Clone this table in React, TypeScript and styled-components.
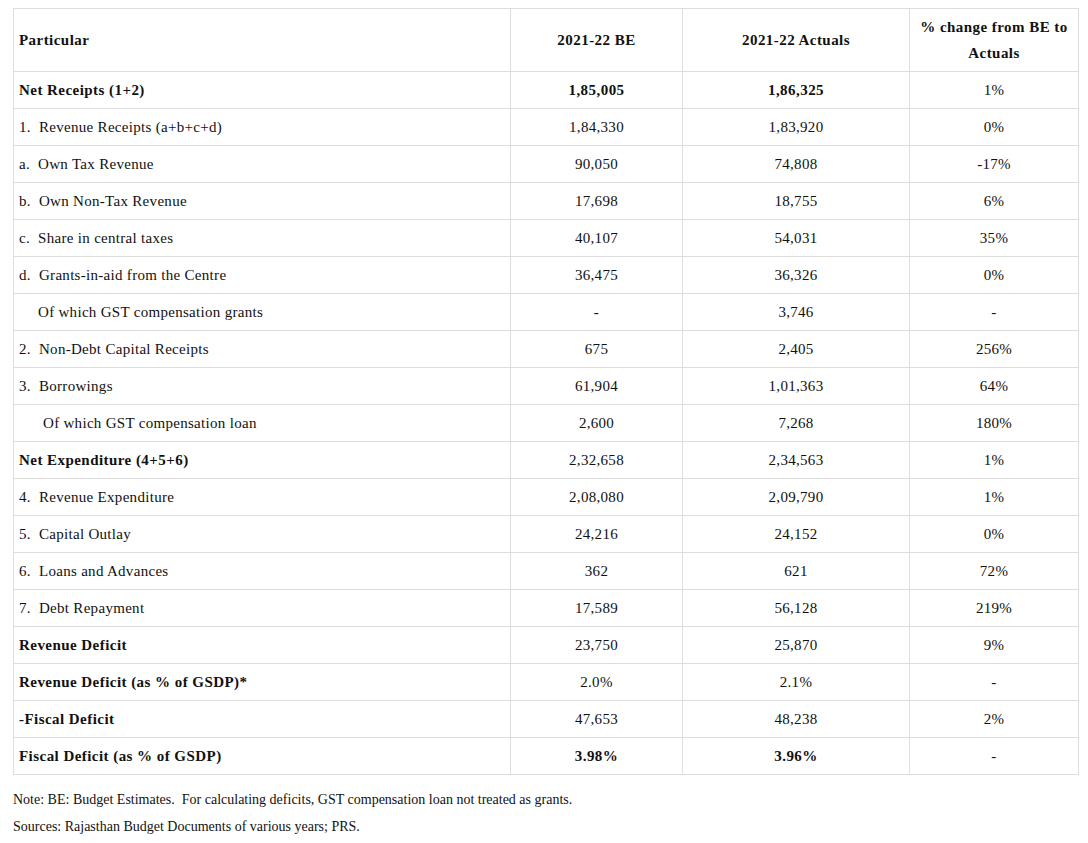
import React from "react";
import styled, { createGlobalStyle } from "styled-components";

const SERIF = `"Liberation Serif", "Times New Roman", Times, serif`;

const Global = createGlobalStyle`
  body {
    margin: 8px;
    background: #fff;
    font-family: ${SERIF};
    color: #111;
  }
`;

const Wrap = styled.div`
  padding-left: 5px;
  font-family: ${SERIF};
  color: #111;
`;

const Table = styled.table`
  width: 1065px;
  border-collapse: collapse;
  table-layout: fixed;
  font-family: ${SERIF};
  font-size: 15px;
  line-height: 26px;
  color: #111;
`;

const Th = styled.th<{ $left?: boolean }>`
  border: 1px solid #ddd;
  padding: 5px 5px;
  font-family: ${SERIF};
  font-weight: bold;
  letter-spacing: 0.45px;
  text-align: ${(p) => (p.$left ? "left" : "center")};
  vertical-align: middle;
`;

const Td = styled.td<{ $left?: boolean; $bold?: boolean; $indent?: number }>`
  border: 1px solid #ddd;
  padding: 5px 5px 5px ${(p) => 5 + (p.$indent ?? 0)}px;
  height: 26px;
  font-family: ${SERIF};
  font-weight: ${(p) => (p.$bold ? "bold" : "normal")};
  letter-spacing: ${(p) => (p.$bold ? "0.45px" : "0.3px")};
  text-align: ${(p) => (p.$left ? "left" : "center")};
  white-space: pre;
`;

const Notes = styled.div`
  margin-top: 11px;
  font-family: ${SERIF};
  font-size: 14px;
  line-height: 27px;
  white-space: pre;
`;

type Row = {
  label: string;
  be: string;
  act: string;
  pct: string;
  bold?: boolean;
  boldNums?: boolean;
  indent?: number;
};

const rows: Row[] = [
  { label: "Net Receipts (1+2)", be: "1,85,005", act: "1,86,325", pct: "1%", bold: true, boldNums: true },
  { label: "1.  Revenue Receipts (a+b+c+d)", be: "1,84,330", act: "1,83,920", pct: "0%" },
  { label: "a.  Own Tax Revenue", be: "90,050", act: "74,808", pct: "-17%" },
  { label: "b.  Own Non-Tax Revenue", be: "17,698", act: "18,755", pct: "6%" },
  { label: "c.  Share in central taxes", be: "40,107", act: "54,031", pct: "35%" },
  { label: "d.  Grants-in-aid from the Centre", be: "36,475", act: "36,326", pct: "0%" },
  { label: "Of which GST compensation grants", be: "-", act: "3,746", pct: "-", indent: 19 },
  { label: "2.  Non-Debt Capital Receipts", be: "675", act: "2,405", pct: "256%" },
  { label: "3.  Borrowings", be: "61,904", act: "1,01,363", pct: "64%" },
  { label: "Of which GST compensation loan", be: "2,600", act: "7,268", pct: "180%", indent: 24 },
  { label: "Net Expenditure (4+5+6)", be: "2,32,658", act: "2,34,563", pct: "1%", bold: true },
  { label: "4.  Revenue Expenditure", be: "2,08,080", act: "2,09,790", pct: "1%" },
  { label: "5.  Capital Outlay", be: "24,216", act: "24,152", pct: "0%" },
  { label: "6.  Loans and Advances", be: "362", act: "621", pct: "72%" },
  { label: "7.  Debt Repayment", be: "17,589", act: "56,128", pct: "219%" },
  { label: "Revenue Deficit", be: "23,750", act: "25,870", pct: "9%", bold: true },
  { label: "Revenue Deficit (as % of GSDP)*", be: "2.0%", act: "2.1%", pct: "-", bold: true },
  { label: "-Fiscal Deficit", be: "47,653", act: "48,238", pct: "2%", bold: true },
  { label: "Fiscal Deficit (as % of GSDP)", be: "3.98%", act: "3.96%", pct: "-", bold: true, boldNums: true },
];

export default function App() {
  return (
    <Wrap>
      <Global />
      <Table>
        <colgroup>
          <col style={{ width: 497 }} />
          <col style={{ width: 172 }} />
          <col style={{ width: 227 }} />
          <col style={{ width: 169 }} />
        </colgroup>
        <thead>
          <tr>
            <Th $left>Particular</Th>
            <Th>2021-22 BE</Th>
            <Th>2021-22 Actuals</Th>
            <Th>% change from BE to Actuals</Th>
          </tr>
        </thead>
        <tbody>
          {rows.map((r) => (
            <tr key={r.label}>
              <Td $left $bold={r.bold} $indent={r.indent}>
                {r.label}
              </Td>
              <Td $bold={r.boldNums}>{r.be}</Td>
              <Td $bold={r.boldNums}>{r.act}</Td>
              <Td>{r.pct}</Td>
            </tr>
          ))}
        </tbody>
      </Table>
      <Notes>
        <div>{"Note: BE: Budget Estimates.  For calculating deficits, GST compensation loan not treated as grants."}</div>
        <div>Sources: Rajasthan Budget Documents of various years; PRS.</div>
      </Notes>
    </Wrap>
  );
}
